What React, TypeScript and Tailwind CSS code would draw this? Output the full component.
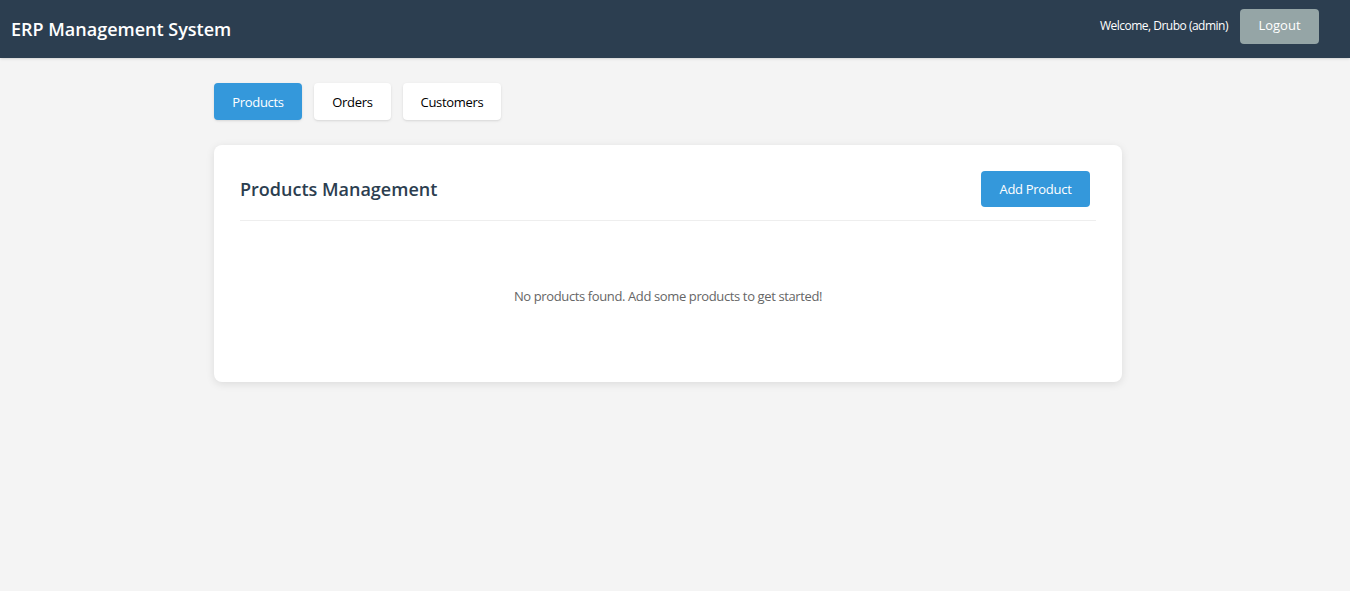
import React from "react";

const font = { fontFamily: '"Open Sans", "Noto Sans", sans-serif' };

const tabs = [
  { name: "Products", w: "w-[88px]" },
  { name: "Orders", w: "w-[77px]" },
  { name: "Customers", w: "w-[98px]" },
];

function Header() {
  return (
    <header className="flex h-[58px] items-center justify-between bg-[#2c3e50] pl-[11px] pr-[31px] text-white shadow-sm">
      <h1 className="text-[18px] font-semibold">ERP Management System</h1>
      <div className="mb-[6px] flex items-center gap-3">
        <span className="text-[12px] tracking-[-0.5px]">Welcome, Drubo (admin)</span>
        <button className="h-[35px] w-[79px] rounded-[4px] bg-[#95a5a6] text-[13px] text-white">
          Logout
        </button>
      </div>
    </header>
  );
}

export default function App() {
  const active = "Products";
  return (
    <div className="min-h-[591px] bg-[#f4f4f4]" style={font}>
      <Header />

      <main className="ml-[214px] w-[908px] pt-[25px]">
        <nav className="flex gap-3">
          {tabs.map((t) => (
            <button
              key={t.name}
              className={
                (t.name === active
                  ? "bg-[#3498db] text-white "
                  : "bg-white text-black ") +
                t.w +
                " h-[37px] rounded-[4px] pt-[2px] text-[13px] tracking-[-0.3px] shadow-sm"
              }
            >
              {t.name}
            </button>
          ))}
        </nav>

        <section className="mt-[25px] rounded-[8px] bg-white px-[26px] pt-[26px] pb-[26px] shadow-[0_2px_8px_rgba(0,0,0,0.1)]">
          <div className="flex items-center justify-between border-b border-[#eeeeee] pb-[13px]">
            <h2 className="text-[18px] font-semibold text-[#2c3e50]">Products Management</h2>
            <button className="mr-[6px] h-[36px] w-[109px] rounded-[4px] bg-[#3498db] pt-[2px] text-[13px] tracking-[-0.3px] text-white">
              Add Product
            </button>
          </div>
          <p className="pt-[65px] pb-[50px] text-center text-[13px] leading-[20px] tracking-[-0.38px] text-[#666666]">
            No products found. Add some products to get started!
          </p>
        </section>
      </main>
    </div>
  );
}
